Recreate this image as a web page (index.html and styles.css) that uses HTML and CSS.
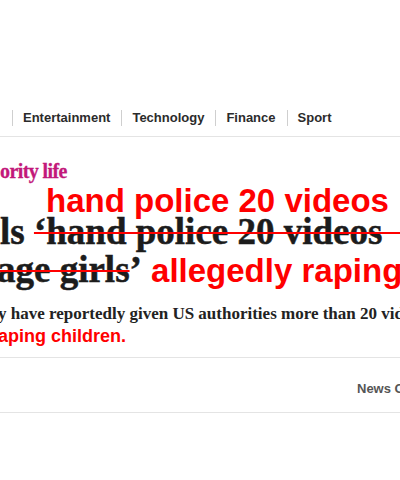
FILE: index.html
```html
<!DOCTYPE html>
<html lang="en">
<head>
    <meta charset="UTF-8">
    <meta name="viewport" content="width=device-width, initial-scale=1.0">
    <title>Article</title>
    <link rel="stylesheet" href="styles.css">
</head>
<body>
<div class="page">
    <nav class="nav">
        <span class="nav-item">Entertainment</span>
        <span class="nav-item">Technology</span>
        <span class="nav-item">Finance</span>
        <span class="nav-item">Sport</span>
    </nav>

    <div class="article">
        <div class="kicker">ority life</div>
        <div class="fix fix-top">hand police 20 videos</div>
        <h1 class="headline">
            <span class="line">ls <span class="struck">‘hand police 20 videos&nbsp;&nbsp;&nbsp;&nbsp;</span></span>
            <span class="line line-two"><span class="struck">age girls</span>’<span class="fix"> allegedly raping children</span></span>
        </h1>
        <div class="standfirst">
            <span class="line">y have reportedly given US authorities more than 20 videos</span>
            <span class="line fix-small">aping children.</span>
        </div>
    </div>

    <div class="byline">
        <span class="source">News Corp Australia</span>
    </div>
</div>
</body>
</html>
```

FILE: styles.css
```css
body {
    margin: 0;
    padding: 0;
    background: #fff;
    font-family: "Liberation Sans", Arial, sans-serif;
}
.page {
    width: 400px;
    height: 480px;
    overflow: hidden;
    white-space: nowrap;
}
.nav {
    display: flex;
    margin-top: 110px;
    padding: 0 0 10px 12px;
    border-bottom: 1px solid #e4e4e4;
}
.nav-item {
    font-size: 13px;
    font-weight: bold;
    line-height: 16px;
    color: #2b2b2b;
    padding: 0 11px 0 10px;
    border-left: 1px solid #cfcfcf;
}
.kicker {
    margin-top: 22px;
    font-family: "Liberation Serif", "Times New Roman", serif;
    font-weight: bold;
    font-size: 20px;
    line-height: 24px;
    letter-spacing: -0.6px;
    color: #c2187a;
    -webkit-text-stroke: 0.3px #c2187a;
}
.fix {
    font-family: "Liberation Sans", Arial, sans-serif;
    font-weight: bold;
    font-size: 33px;
    color: #ff0000;
    -webkit-text-stroke: 0;
}
.fix-top {
    margin-top: 3px;
    padding-left: 46px;
    line-height: 30px;
}
.headline {
    margin: -3px 0 0;
    font-family: "Liberation Serif", "Times New Roman", serif;
    font-weight: bold;
    font-size: 37px;
    line-height: 38px;
    color: #1c1c1c;
    -webkit-text-stroke: 0.5px #1c1c1c;
}
.headline .line {
    display: block;
}
.headline .line-two {
    text-indent: -3px;
}
.struck {
    text-decoration: line-through;
    text-decoration-color: #ff0000;
    text-decoration-thickness: 2px;
}
.standfirst {
    margin-top: 13px;
    padding-bottom: 10px;
    border-bottom: 1px solid #e4e4e4;
    font-family: "Liberation Serif", "Times New Roman", serif;
    font-weight: bold;
    font-size: 17px;
    line-height: 22px;
    color: #222;
}
.standfirst .line {
    display: block;
    text-indent: -2px;
}
.fix-small {
    font-family: "Liberation Sans", Arial, sans-serif;
    font-size: 18px;
    color: #ff0000;
}
.byline {
    margin-top: 21px;
    padding: 0 0 15px 357px;
    border-bottom: 1px solid #e4e4e4;
}
.source {
    font-size: 13px;
    font-weight: bold;
    line-height: 14px;
    color: #555;
}
```
